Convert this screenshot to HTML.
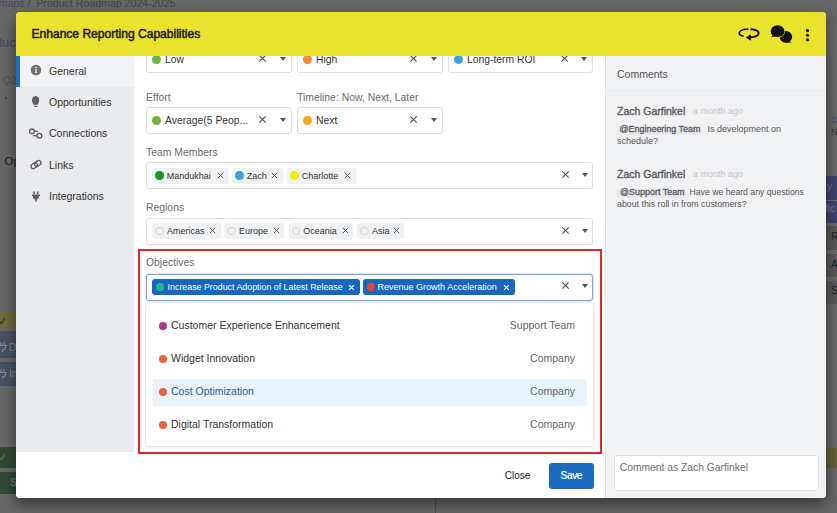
<!DOCTYPE html>
<html><head><meta charset="utf-8">
<style>
*{box-sizing:border-box;margin:0;padding:0}
html,body{width:837px;height:513px;overflow:hidden}
body{position:relative;background:#676767;font-family:"Liberation Sans",sans-serif;color:#333}
.a{position:absolute}
.t{position:absolute;white-space:nowrap;line-height:1}
/* background page */
#bg .bar{position:absolute}
/* modal */
#modal{position:absolute;left:16px;top:12px;width:810px;height:486px;border-radius:4px;overflow:hidden;background:#fff;box-shadow:0 6px 14px rgba(0,0,0,0.5)}
#hdr{position:absolute;left:0;top:0;width:810px;height:44px;background:#e9e22e}
#side{position:absolute;left:0;top:44px;width:118px;height:396px;background:#e9ebee}
#form{position:absolute;left:118px;top:44px;width:471px;height:396px;background:#fff;overflow:hidden}
#foot{position:absolute;left:0;top:440px;width:589px;height:46px;background:#fff}
#cpanel{position:absolute;left:589px;top:44px;width:221px;height:442px;background:#f1f2f4;border-left:1px solid #dfe0e3}
.sel{position:absolute;height:27px;border:1px solid #dedfe2;border-radius:3px;background:#fff}
.dot{position:absolute;width:9px;height:9px;border-radius:50%}
.lbl{position:absolute;font-size:10.4px;color:#6b6b6b;white-space:nowrap;line-height:1}
.val{position:absolute;font-size:10.35px;color:#333;white-space:nowrap;line-height:1}
.x{position:absolute;width:9px;height:9px}
.caret{position:absolute;width:0;height:0;border-left:3.6px solid transparent;border-right:3.6px solid transparent;border-top:4.6px solid #555}
.chip{position:absolute;height:16px;background:#f0f1f3;border-radius:3px}
.chip .dot{top:3px;left:3.2px;width:8.6px;height:8.6px}
.chip span{position:absolute;top:4.3px;font-size:9px;color:#333;white-space:nowrap;line-height:1}
.bchip{position:absolute;height:16px;background:#1767c1;border-radius:3px}
.bchip span{position:absolute;top:3.5px;font-size:9px;color:#fff;white-space:nowrap;line-height:1}
.mi{position:absolute;left:7px;width:434px;height:27px}
.mi span{position:absolute;font-size:10.5px;white-space:nowrap;line-height:1;top:7px}
.nav{position:absolute;left:0;width:118px;height:31px}
.nav span{position:absolute;left:33px;top:10px;font-size:10.5px;color:#333;white-space:nowrap;line-height:1}
</style></head>
<body>
<!-- background page bits -->
<div id="bg">
  <div class="t" style="left:-1.4px;top:-2.3px;font-size:10.6px;color:#3d4551"><span style="color:#3f4c63">maps</span> /&nbsp; Product Roadmap 2024-2025</div>
  <div class="t" style="left:-4.5px;top:37.3px;font-size:12.3px;color:#3c475a">duc</div>
  <div class="t" style="left:3px;top:75.8px;font-size:10px;color:#4c4f54">Q2</div>
  <div class="a" style="left:4.8px;top:97px;width:2px;height:2px;background:#3b3b3b;border-radius:50%"></div>
  <div class="t" style="left:4.5px;top:156px;font-size:11.5px;color:#1a1a1a">Op</div>
  <div class="bar" style="left:0;top:312px;width:16px;height:17px;background:#6e6b3e"></div>
  <svg class="a" style="left:0;top:316px" width="8" height="10" viewBox="0 0 8 10"><path d="M-1 5 L1.5 7.5 L5 2" fill="none" stroke="#3c3a22" stroke-width="1.3"/></svg>
  <div class="bar" style="left:0;top:331px;width:16px;height:27px;background:#4a5061"></div>
  <div class="t" style="left:9px;top:343px;font-size:10px;color:#7f889b">D</div>
  <svg class="a" style="left:0;top:341px" width="8" height="12" viewBox="0 0 8 12"><path d="M1 1 V4 M4 1 V4 M-1 4.5 H6 L5 8 L2.5 9 V11" fill="none" stroke="#7f889b" stroke-width="1.2"/></svg>
  <div class="bar" style="left:0;top:362px;width:16px;height:24px;background:#4a5061"></div>
  <div class="t" style="left:9px;top:369px;font-size:10px;color:#7f889b">In</div>
  <svg class="a" style="left:0;top:368px" width="8" height="12" viewBox="0 0 8 12"><path d="M1 1 V4 M4 1 V4 M-1 4.5 H6 L5 8 L2.5 9 V11" fill="none" stroke="#7f889b" stroke-width="1.2"/></svg>
  <div class="bar" style="left:0;top:447px;width:16px;height:21px;background:#2f4a33"></div>
  <svg class="a" style="left:0;top:452px" width="8" height="10" viewBox="0 0 8 10"><path d="M-1 5 L1.5 7.5 L5 2" fill="none" stroke="#5d7560" stroke-width="1.2"/></svg>
  <div class="bar" style="left:0;top:472px;width:16px;height:22px;background:#2f4a33"></div>
  <div class="t" style="left:10px;top:478px;font-size:10px;color:#6f8572">S</div>
  <div class="t" style="left:831px;top:116px;font-size:9px;color:#3f4c63">C</div>
  <div class="t" style="left:831px;top:128px;font-size:9px;color:#333">N</div>
  <div class="bar" style="left:826px;top:176px;width:11px;height:24px;background:#41426b"></div>
  <div class="t" style="left:827px;top:182px;font-size:10px;color:#6a6b90">y</div>
  <div class="bar" style="left:826px;top:201px;width:11px;height:22px;background:#41426b"></div>
  <div class="t" style="left:825px;top:204px;font-size:10px;color:#7c7d9c">fic</div>
  <div class="bar" style="left:826px;top:225px;width:11px;height:26px;background:#575757;border-top:1px solid #6b6b6b;border-bottom:1px solid #6b6b6b"></div>
  <div class="t" style="left:831px;top:232px;font-size:10px;color:#222">R</div>
  <div class="bar" style="left:826px;top:253px;width:11px;height:25px;background:#575757;border-top:1px solid #6b6b6b;border-bottom:1px solid #6b6b6b"></div>
  <div class="t" style="left:831px;top:260px;font-size:10px;color:#222">A</div>
  <div class="bar" style="left:826px;top:280px;width:11px;height:25px;background:#575757;border-top:1px solid #6b6b6b;border-bottom:1px solid #6b6b6b"></div>
  <div class="t" style="left:831px;top:286px;font-size:10px;color:#222">S</div>
  <div class="bar" style="left:826px;top:448px;width:11px;height:20px;background:#625f38"></div>
  <div class="bar" style="left:435px;top:490px;width:1px;height:23px;background:#505050"></div>
</div>

<div id="modal">
  <div id="hdr">
    <div class="t" style="left:15.5px;top:16px;font-size:12.05px;-webkit-text-stroke:0.5px #1b1b12;color:#1b1b12">Enhance Reporting Capabilities</div>
  </div>
  <div id="side">
    <div class="nav" style="top:0;background:#f2f3f5;border-left:4px solid #1b6ec2"><span style="left:29px">General</span></div>
    <div class="nav" style="top:31px"><span>Opportunities</span></div>
    <div class="nav" style="top:62px"><span>Connections</span></div>
    <div class="nav" style="top:94px"><span>Links</span></div>
    <div class="nav" style="top:125px"><span>Integrations</span></div>
  </div>
  <div id="form">
    <!-- row1 -->
    <div class="sel" style="left:12px;top:-10px;width:146px">
      <div class="dot" style="left:5.3px;top:7.9px;background:#6db33f"></div>
      <div class="val" style="left:18px;top:7.6px">Low</div>
      <svg class="x" style="right:24px;top:7px" viewBox="0 0 9 9"><path d="M1.3 1.3L7.7 7.7M7.7 1.3L1.3 7.7" stroke="#555" stroke-width="1.2"/></svg>
      <div class="caret" style="right:5px;top:10px"></div>
    </div>
    <div class="sel" style="left:163px;top:-10px;width:146px">
      <div class="dot" style="left:5.3px;top:7.9px;background:#ee8a3a"></div>
      <div class="val" style="left:18px;top:7.6px">High</div>
      <svg class="x" style="right:24px;top:7px" viewBox="0 0 9 9"><path d="M1.3 1.3L7.7 7.7M7.7 1.3L1.3 7.7" stroke="#555" stroke-width="1.2"/></svg>
      <div class="caret" style="right:5px;top:10px"></div>
    </div>
    <div class="sel" style="left:314px;top:-10px;width:145px">
      <div class="dot" style="left:5.3px;top:7.9px;background:#3ea3dc"></div>
      <div class="val" style="left:18px;top:7.6px">Long-term ROI</div>
      <svg class="x" style="right:23px;top:7px" viewBox="0 0 9 9"><path d="M1.3 1.3L7.7 7.7M7.7 1.3L1.3 7.7" stroke="#555" stroke-width="1.2"/></svg>
      <div class="caret" style="right:5px;top:10px"></div>
    </div>
    <!-- row2 -->
    <div class="lbl" style="left:12px;top:36.7px">Effort</div>
    <div class="lbl" style="left:163px;top:36.7px">Timeline: Now, Next, Later</div>
    <div class="sel" style="left:12px;top:51px;width:146px">
      <div class="dot" style="left:5.3px;top:7.9px;background:#6db33f"></div>
      <div class="val" style="left:18px;top:7.6px">Average(5 Peop...</div>
      <svg class="x" style="right:24px;top:7px" viewBox="0 0 9 9"><path d="M1.3 1.3L7.7 7.7M7.7 1.3L1.3 7.7" stroke="#555" stroke-width="1.2"/></svg>
      <div class="caret" style="right:5px;top:10px"></div>
    </div>
    <div class="sel" style="left:163px;top:51px;width:146px">
      <div class="dot" style="left:5.3px;top:7.9px;background:#f0a81c"></div>
      <div class="val" style="left:18px;top:7.6px">Next</div>
      <svg class="x" style="right:24px;top:7px" viewBox="0 0 9 9"><path d="M1.3 1.3L7.7 7.7M7.7 1.3L1.3 7.7" stroke="#555" stroke-width="1.2"/></svg>
      <div class="caret" style="right:5px;top:10px"></div>
    </div>
    <!-- team -->
    <div class="lbl" style="left:12px;top:92px">Team Members</div>
    <div class="sel" style="left:12px;top:106px;width:447px">
      <div class="chip" style="left:5px;top:5px;width:77px"><div class="dot" style="background:#0f9a22"></div><span style="left:14.8px">Mandukhai</span><svg class="x" style="left:65px;top:4px;width:7px;height:7px" viewBox="0 0 7 7"><path d="M0.8 0.8L6.2 6.2M6.2 0.8L0.8 6.2" stroke="#555" stroke-width="1"/></svg></div>
      <div class="chip" style="left:85px;top:5px;width:51px"><div class="dot" style="background:#3ea3dc"></div><span style="left:14.8px">Zach</span><svg class="x" style="left:39px;top:4px;width:7px;height:7px" viewBox="0 0 7 7"><path d="M0.8 0.8L6.2 6.2M6.2 0.8L0.8 6.2" stroke="#555" stroke-width="1"/></svg></div>
      <div class="chip" style="left:140px;top:5px;width:70px"><div class="dot" style="background:#efec08"></div><span style="left:14.8px">Charlotte</span><svg class="x" style="left:57px;top:4px;width:7px;height:7px" viewBox="0 0 7 7"><path d="M0.8 0.8L6.2 6.2M6.2 0.8L0.8 6.2" stroke="#555" stroke-width="1"/></svg></div>
      <svg class="x" style="right:22.5px;top:7px" viewBox="0 0 9 9"><path d="M1.3 1.3L7.7 7.7M7.7 1.3L1.3 7.7" stroke="#555" stroke-width="1.2"/></svg>
      <div class="caret" style="right:4px;top:10px"></div>
    </div>
    <!-- regions -->
    <div class="lbl" style="left:12px;top:147.3px">Regions</div>
    <div class="sel" style="left:12px;top:162px;width:447px">
      <div class="chip" style="left:5.3px;top:4px;width:68.4px"><div class="dot" style="top:3.5px;background:transparent;border:1px solid #d0d2d5"></div><span style="left:14.8px">Americas</span><svg class="x" style="left:57px;top:4px;width:7px;height:7px" viewBox="0 0 7 7"><path d="M0.8 0.8L6.2 6.2M6.2 0.8L0.8 6.2" stroke="#555" stroke-width="1"/></svg></div>
      <div class="chip" style="left:77.2px;top:4px;width:60.2px"><div class="dot" style="top:3.5px;background:transparent;border:1px solid #d0d2d5"></div><span style="left:14.8px">Europe</span><svg class="x" style="left:49px;top:4px;width:7px;height:7px" viewBox="0 0 7 7"><path d="M0.8 0.8L6.2 6.2M6.2 0.8L0.8 6.2" stroke="#555" stroke-width="1"/></svg></div>
      <div class="chip" style="left:141.5px;top:4px;width:64.8px"><div class="dot" style="top:3.5px;background:transparent;border:1px solid #d0d2d5"></div><span style="left:14.8px">Oceania</span><svg class="x" style="left:53px;top:4px;width:7px;height:7px" viewBox="0 0 7 7"><path d="M0.8 0.8L6.2 6.2M6.2 0.8L0.8 6.2" stroke="#555" stroke-width="1"/></svg></div>
      <div class="chip" style="left:210.3px;top:4px;width:47.2px"><div class="dot" style="top:3.5px;background:transparent;border:1px solid #d0d2d5"></div><span style="left:14.8px">Asia</span><svg class="x" style="left:36px;top:4px;width:7px;height:7px" viewBox="0 0 7 7"><path d="M0.8 0.8L6.2 6.2M6.2 0.8L0.8 6.2" stroke="#555" stroke-width="1"/></svg></div>
      <svg class="x" style="right:22.5px;top:7px" viewBox="0 0 9 9"><path d="M1.3 1.3L7.7 7.7M7.7 1.3L1.3 7.7" stroke="#555" stroke-width="1.2"/></svg>
      <div class="caret" style="right:4px;top:10px"></div>
    </div>
    <!-- objectives -->
    <div class="lbl" style="left:12px;top:202.3px">Objectives</div>
    <div class="sel" style="left:12px;top:218px;width:447px;height:26.5px;border-color:#7ea3d6;box-shadow:0 0 0 1px #d9e9f9">
      <div class="bchip" style="left:5px;top:4px;width:208px"><div class="dot" style="left:3.6px;top:4px;width:8.2px;height:8.2px;background:#22b98a"></div><span style="left:15.6px;font-size:8.85px">Increase Product Adoption of Latest Release</span><svg class="x" style="left:196px;top:4.5px;width:7px;height:7px" viewBox="0 0 7 7"><path d="M1.1 1.1L5.9 5.9M5.9 1.1L1.1 5.9" stroke="#fff" stroke-width="1.15"/></svg></div>
      <div class="bchip" style="left:216px;top:4px;width:152px"><div class="dot" style="left:3.6px;top:4px;width:8.2px;height:8.2px;background:#e8462c"></div><span style="left:14.6px">Revenue Growth Acceleration</span><svg class="x" style="left:139.7px;top:4.5px;width:7px;height:7px" viewBox="0 0 7 7"><path d="M1.1 1.1L5.9 5.9M5.9 1.1L1.1 5.9" stroke="#fff" stroke-width="1.15"/></svg></div>
      <svg class="x" style="right:22.5px;top:6px" viewBox="0 0 9 9"><path d="M1.3 1.3L7.7 7.7M7.7 1.3L1.3 7.7" stroke="#555" stroke-width="1.2"/></svg>
      <div class="caret" style="right:4px;top:9.4px"></div>
    </div>
    <!-- menu -->
    <div class="a" style="left:12px;top:247px;width:447px;height:143px;background:#fff;border-radius:2px;box-shadow:0 0 0 1px rgba(0,0,0,0.04),0 1px 3px rgba(0,0,0,0.12)">
      <div class="mi" style="top:10px"><div class="dot" style="left:6px;top:9.2px;width:8.2px;height:8.2px;background:#a63a85"></div><span style="left:18px;color:#333">Customer Experience Enhancement</span><span style="right:12px;color:#666">Support Team</span></div>
      <div class="mi" style="top:43px"><div class="dot" style="left:6px;top:9.2px;width:8.2px;height:8.2px;background:#e8643a"></div><span style="left:18px;color:#333">Widget Innovation</span><span style="right:12px;color:#666">Company</span></div>
      <div class="mi" style="top:76px;background:#e9f3fd;border-radius:2px"><div class="dot" style="left:6px;top:9.2px;width:8.2px;height:8.2px;background:#e8643a"></div><span style="left:18px;color:#2a5d99">Cost Optimization</span><span style="right:12px;color:#666">Company</span></div>
      <div class="mi" style="top:109px"><div class="dot" style="left:6px;top:9.2px;width:8.2px;height:8.2px;background:#e8643a"></div><span style="left:18px;color:#333">Digital Transformation</span><span style="right:12px;color:#666">Company</span></div>
    </div>
  </div>
  <div id="foot">
    <div class="t" style="left:488.8px;top:18.8px;font-size:10px;color:#1a1a1a">Close</div>
    <div class="a" style="left:532.7px;top:11px;width:45.3px;height:25.6px;background:#1b6bc1;border-radius:3px"></div>
    <div class="t" style="left:544.6px;top:18.7px;font-size:10.2px;letter-spacing:-0.45px;-webkit-text-stroke:0.2px #fff;color:#fff">Save</div>
  </div>
  <div id="cpanel"></div>
</div>
<!-- comments panel content (page coords) -->
<div class="a" style="left:606px;top:90px;width:220px;height:1px;background:#ebecef"></div>
<div class="t" style="left:617px;top:68.6px;font-size:10.5px;color:#555">Comments</div>
<div class="t" style="left:617px;top:106px;font-size:10.5px;-webkit-text-stroke:0.35px #5a5a5a;color:#5a5a5a">Zach Garfinkel</div>
<div class="t" style="left:693px;top:107.2px;font-size:9px;color:#c4c5c8">a month ago</div>
<div class="a" style="left:617px;top:125.5px;width:85px;height:9px;background:#e7e8ea;border-radius:2px"></div>
<div class="t" style="left:619.5px;top:125.1px;font-size:8.95px;-webkit-text-stroke:0.3px #5e5e5e;color:#5e5e5e">@Engineering Team</div>
<div class="t" style="left:707.5px;top:124.7px;font-size:9px;color:#555">Is development on</div>
<div class="t" style="left:617px;top:136.6px;font-size:9px;color:#555">schedule?</div>
<div class="t" style="left:617px;top:169px;font-size:10.5px;-webkit-text-stroke:0.35px #5a5a5a;color:#5a5a5a">Zach Garfinkel</div>
<div class="t" style="left:693px;top:170.2px;font-size:9px;color:#c4c5c8">a month ago</div>
<div class="a" style="left:617px;top:188.5px;width:69px;height:9px;background:#e7e8ea;border-radius:2px"></div>
<div class="t" style="left:620px;top:188.1px;font-size:8.95px;-webkit-text-stroke:0.3px #5e5e5e;color:#5e5e5e">@Support Team</div>
<div class="t" style="left:689.5px;top:187.7px;font-size:8.7px;color:#555">Have we heard any questions</div>
<div class="t" style="left:617px;top:199.6px;font-size:8.8px;color:#555">about this roll in from customers?</div>
<!-- comment input -->
<div class="a" style="left:613.5px;top:454.5px;width:205px;height:36px;background:#fff;border:1px solid #e0e1e4;border-radius:3px"></div>
<div class="t" style="left:619.8px;top:462.5px;font-size:10.3px;color:#6e6e6e">Comment as Zach Garfinkel</div>
<!-- red annotation box -->
<div class="a" style="left:138px;top:249px;width:464px;height:205px;border:2px solid #e3282a"></div>
<!-- header icons -->
<svg class="a" style="left:738px;top:26px" width="22" height="16" viewBox="0 0 22 16">
  <path d="M8.7 3.2 C5 3.4 1.2 4.9 1.2 7.3 C1.2 8.8 3 9.8 5.6 10.2" fill="none" stroke="#111" stroke-width="1.7"/>
  <path d="M8.3 3.9 L9.5 1.8 L10.8 3.7 Z" fill="#111"/>
  <path d="M12.4 3.2 C17 3.5 20.6 5 20.6 7.3 C20.6 9.6 17.5 11 12.5 11.3" fill="none" stroke="#111" stroke-width="2"/>
  <path d="M7.8 11.4 L12.8 8.2 L12.9 14.7 Z" fill="#111"/>
</svg>
<svg class="a" style="left:768px;top:23px" width="26" height="22" viewBox="0 0 26 22">
  <ellipse cx="17.9" cy="13.9" rx="6.3" ry="5.9" fill="#111"/>
  <path d="M20.5 18 L24 19.6 L16.5 19.7 Z" fill="#111"/>
  <ellipse cx="9.6" cy="8.2" rx="7.5" ry="6.4" fill="#e9e22e"/>
  <ellipse cx="9.6" cy="8.2" rx="6.9" ry="5.9" fill="#111"/>
  <path d="M5 12 L2.8 14 L8.5 13.6 Z" fill="#111"/>
</svg>
<svg class="a" style="left:804px;top:27px" width="7" height="16" viewBox="0 0 7 16">
  <circle cx="3.5" cy="3.65" r="1.55" fill="#111"/>
  <circle cx="3.5" cy="8.2" r="1.55" fill="#111"/>
  <circle cx="3.5" cy="12.7" r="1.55" fill="#111"/>
</svg>
<!-- sidebar icons -->
<svg class="a" style="left:26px;top:60px" width="20" height="150" viewBox="0 0 20 150">
  <circle cx="10" cy="10" r="5.3" fill="#707070"/>
  <circle cx="10" cy="7.4" r="0.8" fill="#eee"/>
  <path d="M8.9 9 H10.6 V12.3 H11.1 V13 H8.9 V12.3 H9.4 V9.7 H8.9 Z" fill="#eee"/>
  <path d="M6.1 41 A3.7 3.7 0 1 1 13.1 41 C13.1 42.8 11.8 43.6 11.8 44.8 H7.4 C7.4 43.6 6.1 42.8 6.1 41 Z" fill="#5e5e5e"/>
  <path d="M8 45.8 H11.8 L11.1 47 H8.7 Z" fill="#5e5e5e"/>
  <circle cx="5.9" cy="71.4" r="2.4" fill="none" stroke="#5a5a5a" stroke-width="1.3"/>
  <path d="M8.3 71.3 H11.8" stroke="#5a5a5a" stroke-width="1.3"/>
  <circle cx="13.4" cy="75.7" r="2.4" fill="none" stroke="#5a5a5a" stroke-width="1.3"/>
  <path d="M7.3 75.7 H11" stroke="#5a5a5a" stroke-width="1.3"/>
  <g transform="translate(10 104.6) rotate(-33)">
    <rect x="-5.6" y="-2.3" width="6.9" height="4.6" rx="2.3" fill="none" stroke="#5a5a5a" stroke-width="1.25"/>
    <rect x="-1.3" y="-2.3" width="6.9" height="4.6" rx="2.3" fill="none" stroke="#5a5a5a" stroke-width="1.25"/>
  </g>
  <path d="M7.2 131.5 H8.8 V134.2 H7.2 Z M10.9 131.5 H12.5 V134.2 H10.9 Z" fill="#5e5e5e"/>
  <path d="M6 134.6 H14 V136 H13 L12.4 138.6 L10.6 139.8 V141.8 H9.2 V139.8 L7.4 138.6 L6.8 136 H6 Z" fill="#5e5e5e"/>
</svg>
</body></html>
